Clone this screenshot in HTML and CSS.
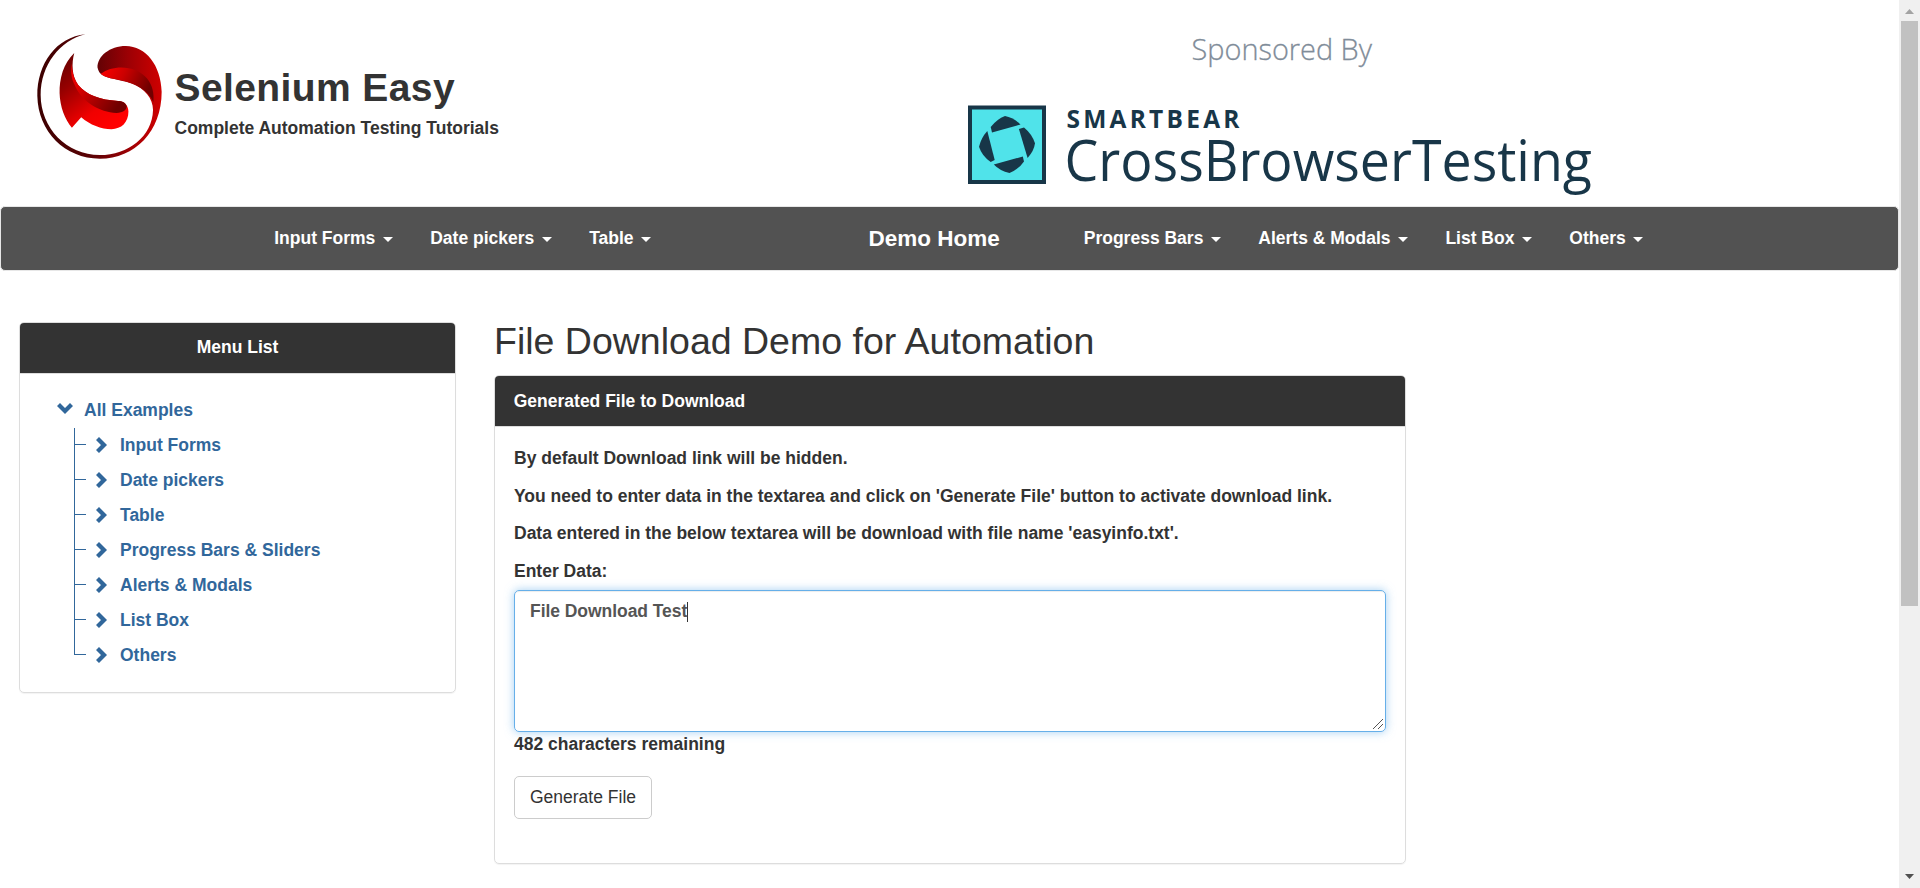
FILE: index.html
```html
<!DOCTYPE html>
<html lang="en">
<head>
<meta charset="utf-8">
<title>Selenium Easy - File Download Demo</title>
<link rel="stylesheet" href="styles.css">
</head>
<body>
<div class="window">
  <div class="page">
    <header class="header">
      <div class="brand">
        <svg class="brand-logo" viewBox="51 41 376 377" preserveAspectRatio="none">
          <defs>
            <linearGradient id="ring" x1="0" y1="0" x2="1" y2="0">
              <stop offset="0" stop-color="#3c0000"/><stop offset=".45" stop-color="#5c0205"/><stop offset=".75" stop-color="#a00004"/><stop offset="1" stop-color="#d00000"/>
            </linearGradient>
            <linearGradient id="fold" x1="0" y1="0" x2="1" y2=".3">
              <stop offset="0" stop-color="#ff0000"/><stop offset=".45" stop-color="#cc0000"/><stop offset="1" stop-color="#700000"/>
            </linearGradient>
            <linearGradient id="lower" x1="0" y1="0" x2=".7" y2="1">
              <stop offset="0" stop-color="#5c0000"/><stop offset=".35" stop-color="#960000"/><stop offset=".75" stop-color="#f00000"/><stop offset="1" stop-color="#ff0000"/>
            </linearGradient>
            <linearGradient id="crease" x1="0" y1="0" x2="1" y2=".6">
              <stop offset="0" stop-color="#ff0000"/><stop offset=".4" stop-color="#cf0000"/><stop offset="1" stop-color="#700000"/>
            </linearGradient>
          </defs>
          <path fill="url(#ring)" d="M197 42C110 50 51 130 52 228C54 335 135 417 240 417C345 417 426 335 426 215C424 135 378 77 318 77C270 77 232 108 233 142C235 152 240 160 246 164C262 176 300 178 335 190C375 205 400 235 400 270C398 350 325 406 240 406C140 406 62 325 62 225C62 135 120 60 197 42Z"/>
          <path fill="url(#fold)" d="M243 161C280 132 350 135 382 175C398 195 404 220 401 246C386 213 352 193 314 183C284 176 256 174 243 161Z"/>
          <path fill="url(#lower)" d="M163 98C130 130 118 175 119 220C120 260 135 300 156 324L184 292C210 315 245 328 275 328C305 328 326 308 326 275C326 255 312 243 295 243C240 240 200 225 175 195C155 165 155 130 163 98Z"/>
          <path fill="url(#crease)" d="M156 130C152 155 154 175 164 194C184 245 240 277 290 279C310 279 320 270 321 260C318 248 308 243 295 243C240 240 200 225 175 195C160 173 156 150 156 130Z"/>
        </svg>
        <div class="brand-text">
          <h1 class="brand-name">Selenium Easy</h1>
          <p class="brand-tag">Complete Automation Testing Tutorials</p>
        </div>
      </div>
      <svg class="sponsor" viewBox="0 0 680 186">
        <text class="sponsor-by" x="251.500" y="40" textLength="180.500" lengthAdjust="spacingAndGlyphs">Sponsored By</text>
        <rect x="30" y="87.5" width="74" height="74.5" fill="#50e3ea" stroke="#183648" stroke-width="4"/>
        <g fill="#183648">
          <path d="M65 96Q74 98 80.5 104.5L52 112.5L50.7 107Q57 99 65 96Z"/>
          <path d="M78.9 109L84 107.5Q92 114 95 123.3Q94 131 87.6 138Z"/>
          <path d="M53.8 144.5L82.8 136.5L84 141.5Q79 149 69.5 153Q60 151 53.8 144.5Z"/>
          <path d="M47.3 111L54.7 140L50.7 142Q42 136 39 126.7Q41 118 47.3 111Z"/>
        </g>
        <text class="sponsor-brand" x="126.500" y="107.500" textLength="173" lengthAdjust="spacing">SMARTBEAR</text>
        <text class="sponsor-product" x="124.500" y="160.500" textLength="527.500" lengthAdjust="spacingAndGlyphs">CrossBrowserTesting</text>
      </svg>
    </header>

    <nav class="navbar">
      <ul class="nav-list">
        <li class="nav-item">Input Forms <b class="caret"></b></li>
        <li class="nav-item">Date pickers <b class="caret"></b></li>
        <li class="nav-item">Table <b class="caret"></b></li>
      </ul>
      <a class="nav-home">Demo Home</a>
      <ul class="nav-list nav-right">
        <li class="nav-item">Progress Bars <b class="caret"></b></li>
        <li class="nav-item">Alerts &amp; Modals <b class="caret"></b></li>
        <li class="nav-item">List Box <b class="caret"></b></li>
        <li class="nav-item">Others <b class="caret"></b></li>
      </ul>
    </nav>

    <main class="content">
      <aside class="panel menu">
        <div class="panel-head panel-head-center">Menu List</div>
        <div class="tree">
          <div class="tree-root"><svg class="chev-down" viewBox="0 0 16 11"><path d="M0 3L3 0L8 5L13 0L16 3L8 11Z"/></svg>All Examples</div>
          <ul class="tree-list">
            <li class="tree-item"><svg class="chev" viewBox="0 0 11 16"><path d="M3 0L11 8L3 16L0 13L5 8L0 3Z"/></svg>Input Forms</li>
            <li class="tree-item"><svg class="chev" viewBox="0 0 11 16"><path d="M3 0L11 8L3 16L0 13L5 8L0 3Z"/></svg>Date pickers</li>
            <li class="tree-item"><svg class="chev" viewBox="0 0 11 16"><path d="M3 0L11 8L3 16L0 13L5 8L0 3Z"/></svg>Table</li>
            <li class="tree-item"><svg class="chev" viewBox="0 0 11 16"><path d="M3 0L11 8L3 16L0 13L5 8L0 3Z"/></svg>Progress Bars &amp; Sliders</li>
            <li class="tree-item"><svg class="chev" viewBox="0 0 11 16"><path d="M3 0L11 8L3 16L0 13L5 8L0 3Z"/></svg>Alerts &amp; Modals</li>
            <li class="tree-item"><svg class="chev" viewBox="0 0 11 16"><path d="M3 0L11 8L3 16L0 13L5 8L0 3Z"/></svg>List Box</li>
            <li class="tree-item"><svg class="chev" viewBox="0 0 11 16"><path d="M3 0L11 8L3 16L0 13L5 8L0 3Z"/></svg>Others</li>
          </ul>
        </div>
      </aside>
      <section class="demo">
        <h2 class="demo-title">File Download Demo for Automation</h2>
        <div class="panel demo-panel">
          <div class="panel-head demo-head">Generated File to Download</div>
          <div class="demo-body">
            <p class="line">By default Download link will be hidden.</p>
            <p class="line">You need to enter data in the textarea and click on 'Generate File' button to activate download link.</p>
            <p class="line">Data entered in the below textarea will be download with file name 'easyinfo.txt'.</p>
            <p class="line label">Enter Data:</p>
            <div class="field">
              <span class="field-text">File Download Test</span>
              <svg class="grip" viewBox="0 0 10 10"><path d="M0 10L10 0M5 10L10 5"/></svg>
            </div>
            <p class="count">482 characters remaining</p>
            <button class="button" type="button">Generate File</button>
          </div>
        </div>
      </section>
    </main>
  </div>
  <div class="scrollbar">
    <svg class="arrow" viewBox="0 0 21 21"><path fill="#a3a3a3" d="M6 14L10.500 9L15 14Z"/></svg>
    <div class="thumb"></div>
    <svg class="arrow arrow-down" viewBox="0 0 21 21"><path fill="#505050" d="M6 7L15 7L10.500 12Z"/></svg>
  </div>
</div>
</body>
</html>
```

FILE: styles.css
```css
* { box-sizing: border-box; }
body {
  margin: 0;
  overflow: hidden;
  background: #fff;
  color: #333;
  font: bold 17.5px/25px "Liberation Sans", Arial, sans-serif;
}
h1, h2, p, ul { margin: 0; padding: 0; list-style: none; }
svg { display: block; flex: none; }

.window { display: flex; height: 888px; }
.page { flex: 1; min-width: 0; }

.header { display: flex; height: 206px; padding-top: 20px; }
.brand { display: flex; width: 940px; padding: 14px 0 0 37px; }
.brand-logo { width: 125px; height: 125px; }
.brand-text { padding: 31px 0 0 12.500px; }
.brand-name { font-size: 39px; line-height: 45px; letter-spacing: .4px; }
.brand-tag { padding-top: 6px; }
.sponsor { width: 680px; height: 186px; }
.sponsor text { font-family: "Open Sans", sans-serif; fill: #183648; }
.sponsor .sponsor-by { font-size: 30px; font-weight: 300; fill: #7f8c99; stroke: #7f8c99; stroke-width: .3px; }
.sponsor-brand { font-size: 24.500px; font-weight: 700; }
.sponsor-product { font-size: 56px; font-weight: 400; }

.navbar {
  display: flex;
  align-items: center;
  height: 65px;
  padding-left: 254.500px;
  border: 1px solid #e7e7e7;
  border-radius: 5px;
  background: #525252;
  color: #fff;
}
.nav-list { display: flex; width: 613px; }
.nav-right { width: auto; padding-left: 65.500px; }
.nav-item { padding: 0 18.750px; white-space: nowrap; }
.caret {
  display: inline-block;
  margin-left: 2.500px;
  vertical-align: middle;
  border-top: 5px solid #fff;
  border-left: 5px solid transparent;
  border-right: 5px solid transparent;
}
.nav-home { width: 131px; font-size: 22.500px; white-space: nowrap; }

.content { display: flex; padding: 51px 0 0 19px; }
.panel {
  border: 1px solid #ddd;
  border-radius: 5px;
  box-shadow: 0 1px 1px rgba(0, 0, 0, .05);
}
.panel-head {
  height: 51px;
  padding: 12px 18.750px;
  border-bottom: 1px solid #ddd;
  border-radius: 4px 4px 0 0;
  background: #333;
  color: #fff;
}
.panel-head-center { text-align: center; }
.demo-head { padding-top: 13px; }
.menu { width: 437px; height: 371px; }

.tree { padding: 24px 0 0 37px; color: #31679b; }
.tree-root { display: flex; align-items: center; height: 25px; gap: 11px; }
.chev-down { width: 16px; height: 11px; fill: currentColor; margin-top: -5px; }
.tree-list { padding: 5px 0 0 17px; }
.tree-item {
  display: flex;
  align-items: center;
  height: 35px;
  background:
    linear-gradient(#31679b, #31679b) 0 0 / 1px 35px no-repeat,
    linear-gradient(#31679b, #31679b) 0 16px / 12px 1px no-repeat;
  padding-left: 22px;
}
.tree-item:last-child {
  background-size: 1px 17px, 12px 1px;
}
.chev { width: 11px; height: 16px; margin: -1px 13px 0 0; fill: currentColor; }

.demo { width: 912px; margin-left: 38px; }
.demo-title { height: 53px; font-size: 37.500px; line-height: 39px; font-weight: 400; white-space: nowrap; }
.demo-panel { height: 489px; }
.demo-body { padding: 19px 19px 0; }
.line { height: 37.500px; white-space: nowrap; }
.label { height: 31.500px; }
.field {
  position: relative;
  height: 142px;
  padding: 7.500px 15px;
  border: 1px solid #66afe9;
  border-radius: 5px;
  box-shadow: inset 0 1px 1px rgba(0, 0, 0, .075), 0 0 10px rgba(102, 175, 233, .6);
  color: #555;
}
.field-text {
  display: inline-block;
  height: 20px;
  margin-top: 3px;
  line-height: 19px;
  letter-spacing: -.05px;
  border-right: 1px solid #333;
}
.grip { position: absolute; right: 2px; bottom: 2px; width: 10px; height: 10px; stroke: #555; fill: none; }
.count { height: 44px; }
.button {
  display: block;
  height: 43px;
  width: 138px;
  padding: 0;
  border: 1px solid #ccc;
  border-radius: 5px;
  background: #fff;
  color: #333;
  font: 17.5px/25px "Liberation Sans", Arial, sans-serif;
}

.scrollbar { display: flex; flex-direction: column; width: 21px; background: #f0f0f0; align-items: center; }
.arrow { width: 21px; height: 21px; }
.arrow-down { margin-top: auto; }
.thumb { width: 17px; height: 585px; background: #c1c1c1; }
```
